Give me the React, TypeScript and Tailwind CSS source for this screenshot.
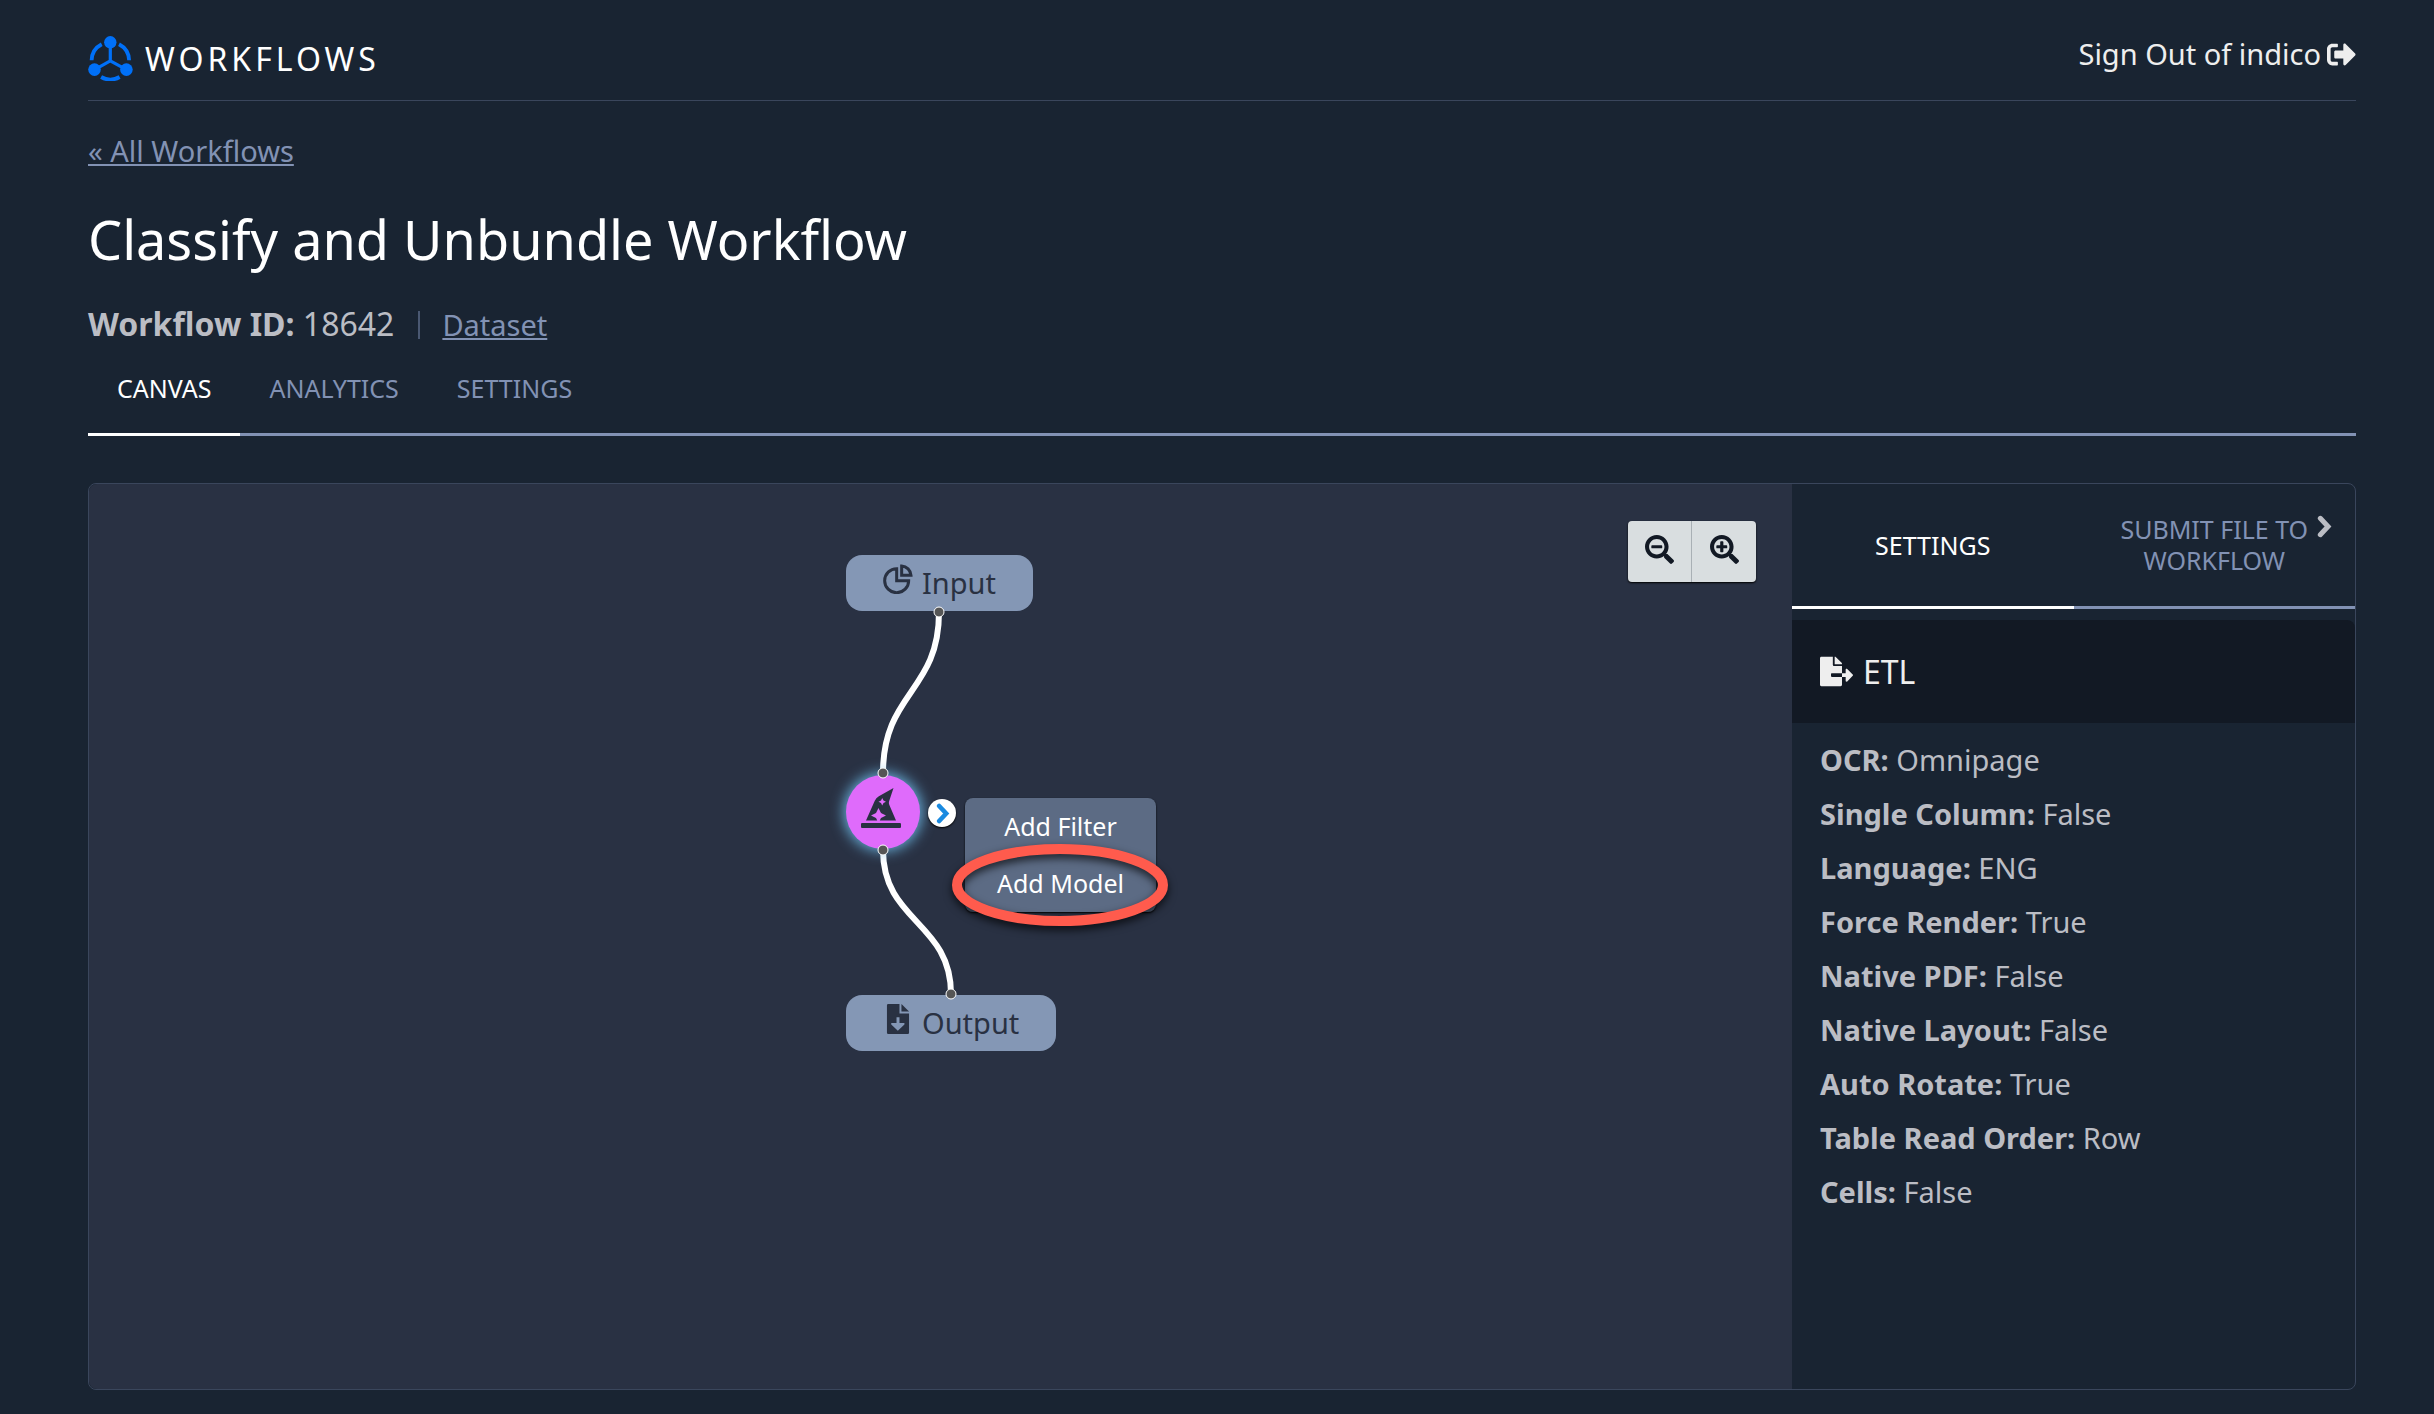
import { useState } from 'react'
import {
  FaFileExport,
  FaHatWizard,
  FaSearchMinus,
  FaSearchPlus,
  FaSignOutAlt,
} from 'react-icons/fa'

const PAGE_TABS = ['Canvas', 'Analytics', 'Settings']
const PANEL_TABS = ['Settings', 'Submit file to workflow']

const ETL_SETTINGS = [
  { label: 'OCR', value: 'Omnipage' },
  { label: 'Single Column', value: 'False' },
  { label: 'Language', value: 'ENG' },
  { label: 'Force Render', value: 'True' },
  { label: 'Native PDF', value: 'False' },
  { label: 'Native Layout', value: 'False' },
  { label: 'Auto Rotate', value: 'True' },
  { label: 'Table Read Order', value: 'Row' },
  { label: 'Cells', value: 'False' },
]

// connection points on the canvas
const HANDLES = [
  { x: 850, y: 128 },
  { x: 794, y: 289 },
  { x: 794, y: 366 },
  { x: 862, y: 510 },
]

function Logo() {
  return (
    <svg className="size-[45px]" viewBox="0 0 45 45" fill="none" stroke="#0070f8" aria-hidden="true">
      <path
        strokeWidth="3.8"
        d="M3.6 24.3A18.7 18.7 0 0 1 13.7 8.2M31 8.2A18.7 18.7 0 0 1 41.1 24.3M13.1 41A18.7 18.7 0 0 0 31.6 41"
      />
      <path strokeWidth="3.2" d="M22.3 6V24.8L6.7 33.6M22.3 24.8L38.4 33.6" />
      <g fill="#0070f8" stroke="none">
        <circle cx="22.3" cy="6.3" r="6.2" />
        <circle cx="6.5" cy="33.6" r="6.3" />
        <circle cx="38.4" cy="33.6" r="6.3" />
      </g>
    </svg>
  )
}

function Chevron({ className }: { className: string }) {
  return (
    <svg className={className} viewBox="0 0 15 23" fill="none" stroke="currentColor" strokeWidth="5" strokeLinecap="round" aria-hidden="true">
      <path d="M3.3 3.3L11 11.5L3.3 19.7" />
    </svg>
  )
}

function PieIcon() {
  return (
    <svg className="size-[30px] mb-2" viewBox="0 0 90 90" fill="none" stroke="currentColor" strokeWidth="9" aria-hidden="true">
      <path d="M41 14V50H77A36 36 0 1 1 41 14Z" />
      <path d="M56 6V34H84A30 30 0 0 0 56 6Z" />
    </svg>
  )
}

function FileDownIcon() {
  return (
    <svg className="size-[30px] mb-2" viewBox="0 0 67 91" fill="currentColor" aria-hidden="true">
      <path
        fillRule="evenodd"
        d="M4 0H38V29H67V87Q67 91 63 91H4Q0 91 0 87V4Q0 0 4 0ZM29 40V58H13V62L33 81L53 62V58H38V40Z"
      />
      <path d="M44 0L67 23H44Z" />
    </svg>
  )
}

function Canvas() {
  return (
    <section className="relative flex-1 bg-[#293143] rounded-l-lg overflow-hidden">
      <svg className="absolute inset-0 w-full h-full" fill="none" stroke="#fff" strokeWidth="6" aria-hidden="true">
        <path d="M850 128C850 208 794 208 794 289" />
        <path d="M794 366C794 438 862 438 862 510" />
      </svg>

      <div className="absolute left-[757px] top-[71px] h-14 px-[37px] flex items-center gap-[9px] rounded-2xl bg-[#8497b5] text-[#293142] text-[29px]">
        <PieIcon />
        Input
      </div>

      <button
        aria-label="ETL"
        className="absolute left-[757px] top-[291px] size-[74px] flex items-center justify-center rounded-full bg-[#df6bfb] text-[#293142] shadow-[0_0_14px_2px_#6bb4e0]"
      >
        <FaHatWizard className="size-10 mb-2 mr-1" />
      </button>

      <div className="absolute left-[757px] top-[511px] h-14 px-[37px] flex items-center gap-[9px] rounded-2xl bg-[#8497b5] text-[#293142] text-[29px]">
        <FileDownIcon />
        Output
      </div>

      {HANDLES.map((h) => (
        <span
          key={`${h.x}-${h.y}`}
          className="absolute size-[11px] -translate-1/2 rounded-full bg-[#555] border border-white"
          style={{ left: h.x, top: h.y }}
        />
      ))}

      <button
        aria-label="Close menu"
        className="absolute left-[839px] top-[315px] size-7 pl-px flex items-center justify-center rounded-full bg-white text-[#1a8ae0] shadow-[0_1px_2px_#000]"
      >
        <Chevron className="w-[14px] h-[21px]" />
      </button>

      <div className="absolute left-[876px] top-[314px] w-[191px] flex flex-col rounded-lg bg-[#5c6b84] text-white text-[25px] shadow-[0_1px_2px_#000]">
        <button className="h-[57px]">Add Filter</button>
        <button className="h-[57px]">Add Model</button>
      </div>

      {/* highlight ring */}
      <svg
        className="absolute left-[863px] top-[360px] w-[216px] h-[82px] overflow-visible pointer-events-none drop-shadow-[0_4px_4px_rgba(0,0,0,0.7)]"
        viewBox="0 0 216 82"
        aria-hidden="true"
      >
        <ellipse cx="108" cy="41" rx="103" ry="36" fill="none" stroke="#ff5b4d" strokeWidth="10" />
      </svg>

      <div className="absolute top-[37px] right-9 flex rounded-sm bg-[#d9dee0] text-[#121924] shadow-[0_1px_2px_#000]">
        <button aria-label="Zoom out" className="w-16 h-[61px] pb-1 flex items-center justify-center border-r border-[#a9b0b5]">
          <FaSearchMinus className="size-[29px]" />
        </button>
        <button aria-label="Zoom in" className="w-16 h-[61px] pb-1 flex items-center justify-center">
          <FaSearchPlus className="size-[29px]" />
        </button>
      </div>
    </section>
  )
}

function SidePanel() {
  const [tab, setTab] = useState(PANEL_TABS[0])

  return (
    <aside className="relative w-[563px] shrink-0">
      <div className="flex h-[125px]">
        {PANEL_TABS.map((name) => (
          <button
            key={name}
            onClick={() => setTab(name)}
            className={`flex-1 px-9 text-[25px] leading-[31px] uppercase border-b-3 ${
              tab === name ? 'text-white border-white' : 'text-[#8292b4] border-[#8292b4]'
            }`}
          >
            {name}
          </button>
        ))}
      </div>
      <button aria-label="Collapse panel" className="absolute top-[31px] right-[23px] text-[#bbbdc4]">
        <Chevron className="w-[15px] h-[23px]" />
      </button>

      <h2 className="mt-[11px] h-[103px] px-7 flex items-center gap-[10px] rounded-tr-lg bg-[#121924] text-[#eee] text-[32px]">
        <FaFileExport className="size-[33px]" />
        ETL
      </h2>
      <ul className="px-7 py-[10px] text-[29px] leading-[54px] text-[#bbbdc4]">
        {ETL_SETTINGS.map((s) => (
          <li key={s.label}>
            <strong>{s.label}:</strong> {s.value}
          </li>
        ))}
      </ul>
    </aside>
  )
}

export default function App() {
  const [tab, setTab] = useState(PAGE_TABS[0])

  return (
    <div className="min-h-screen flex flex-col pl-[88px] pr-[78px] pb-6 bg-[#192432] font-['Noto_Sans',sans-serif]">
      <header className="flex items-start justify-between pt-9 pb-[19px] border-b border-[#3a465c]">
        <div className="flex items-center gap-3 text-white text-[32px] leading-[45px] tracking-[4px]">
          <Logo />
          WORKFLOWS
        </div>
        <a href="#" className="flex items-center gap-[6px] text-[#eee] text-[29px] leading-9">
          Sign Out of indico
          <FaSignOutAlt className="size-[29px]" />
        </a>
      </header>

      <a href="#" className="self-start mt-[30px] text-[#8292b4] text-[29px] leading-10 underline">
        « All Workflows
      </a>
      <h1 className="mt-8 text-white text-[54px] leading-[72px]">Classify and Unbundle Workflow</h1>
      <div className="mt-[29px] flex items-baseline text-[32px] leading-10 text-[#bbbdc4]">
        <p>
          <strong>Workflow ID:</strong> 18642
        </p>
        <span className="self-center ml-6 mr-[22px] h-7 border-l-2 border-[#4a5872]" />
        <a href="#" className="text-[#8292b4] text-[29px] underline">
          Dataset
        </a>
      </div>

      <nav className="mt-[27px] flex border-b-3 border-[#8292b4]">
        {PAGE_TABS.map((name) => (
          <button
            key={name}
            onClick={() => setTab(name)}
            className={`px-[29px] pb-[29px] -mb-[3px] text-[25px] leading-8 uppercase border-b-3 ${
              tab === name ? 'text-white border-white' : 'text-[#8292b4] border-transparent'
            }`}
          >
            {name}
          </button>
        ))}
      </nav>

      <main className="mt-[47px] flex-1 flex border border-[#3a465c] rounded-lg">
        <Canvas />
        <SidePanel />
      </main>
    </div>
  )
}
